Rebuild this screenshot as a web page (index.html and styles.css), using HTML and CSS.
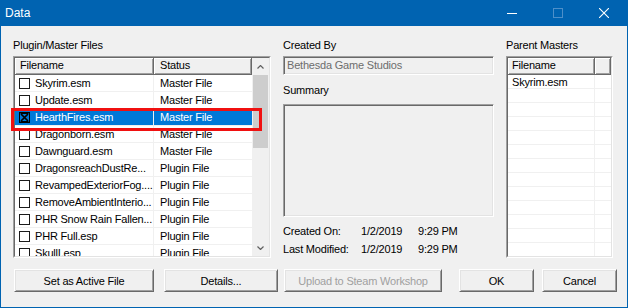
FILE: index.html
```html
<!DOCTYPE html>
<html lang="en">
<head>
    <meta charset="UTF-8">
    <title>Data</title>
    <link rel="stylesheet" href="styles.css">
</head>
<body>

<div class="window">
    <!-- Title bar -->
    <div class="titlebar">
        <span class="title">Data</span>
        <div class="caption-buttons">
            <span class="cap"><svg width="10" height="10" viewBox="0 0 10 10"><line x1="0" y1="5.5" x2="10" y2="5.5" stroke="#fff" stroke-width="1"/></svg></span>
            <span class="cap cap-disabled"><svg width="10" height="10" viewBox="0 0 10 10"><rect x="0.5" y="0.5" width="9" height="9" fill="none" stroke="#4d8fc9" stroke-width="1"/></svg></span>
            <span class="cap"><svg width="10" height="10" viewBox="0 0 10 10"><path d="M0 0 L10 10 M10 0 L0 10" stroke="#fff" stroke-width="1.1"/></svg></span>
        </div>
    </div>

    <div class="client">
        <div class="columns">

            <!-- Plugin / master list -->
            <div class="col col-files">
                <div class="label">Plugin/Master Files</div>
                <div class="listbox">
                    <div class="listbox-inner">
                        <div class="lv">
                            <div class="lv-header">
                                <div class="th th-name">Filename</div>
                                <div class="th th-status">Status</div>
                            </div>
                            <div class="lv-row"><div class="td td-name"><span class="check"></span>Skyrim.esm</div><div class="td td-status">Master File</div></div>
                            <div class="lv-row"><div class="td td-name"><span class="check"></span>Update.esm</div><div class="td td-status">Master File</div></div>
                            <div class="lv-row selected"><div class="td td-name"><span class="check checked"><svg width="11" height="11" viewBox="0 0 11 11"><rect x="0.5" y="0.5" width="10" height="10" fill="none" stroke="#000"/><path d="M2 2 L9 9 M9 2 L2 9" stroke="#000" stroke-width="1.7"/><path d="M1.5 1.5 H9.5 M1.5 9.5 H9.5" stroke="#000" stroke-width="1"/></svg></span>HearthFires.esm</div><div class="td td-status">Master File</div></div>
                            <div class="lv-row"><div class="td td-name"><span class="check"></span>Dragonborn.esm</div><div class="td td-status">Master File</div></div>
                            <div class="lv-row"><div class="td td-name"><span class="check"></span>Dawnguard.esm</div><div class="td td-status">Master File</div></div>
                            <div class="lv-row"><div class="td td-name"><span class="check"></span>DragonsreachDustRe...</div><div class="td td-status">Plugin File</div></div>
                            <div class="lv-row"><div class="td td-name"><span class="check"></span>RevampedExteriorFog....</div><div class="td td-status">Plugin File</div></div>
                            <div class="lv-row"><div class="td td-name"><span class="check"></span>RemoveAmbientInterio...</div><div class="td td-status">Plugin File</div></div>
                            <div class="lv-row"><div class="td td-name"><span class="check"></span>PHR Snow Rain Fallen...</div><div class="td td-status">Plugin File</div></div>
                            <div class="lv-row"><div class="td td-name"><span class="check"></span>PHR Full.esp</div><div class="td td-status">Plugin File</div></div>
                            <div class="lv-row"><div class="td td-name"><span class="check"></span>SkullI.esp</div><div class="td td-status">Plugin File</div></div>
                        </div>
                        <div class="vscroll">
                            <div class="sb-btn"><svg width="7" height="4" viewBox="0 0 7 4"><path d="M0.5 3.5 L3.5 0.5 L6.5 3.5" fill="none" stroke="#606060" stroke-width="1.2"/></svg></div>
                            <div class="sb-track"><div class="sb-thumb"></div></div>
                            <div class="sb-btn"><svg width="7" height="4" viewBox="0 0 7 4"><path d="M0.5 0.5 L3.5 3.5 L6.5 0.5" fill="none" stroke="#606060" stroke-width="1.2"/></svg></div>
                        </div>
                    </div>
                    <!-- red highlight drawn over the selected row -->
                    <div class="mark"></div>
                </div>
            </div>

            <!-- File details -->
            <div class="col col-info">
                <div class="label">Created By</div>
                <div class="field">Bethesda Game Studios</div>
                <div class="label label-summary">Summary</div>
                <div class="field summary"></div>
                <div class="dates">
                    <span>Created On:</span><span>1/2/2019</span><span>9:29 PM</span>
                    <span>Last Modified:</span><span>1/2/2019</span><span>9:29 PM</span>
                </div>
            </div>

            <!-- Parent masters -->
            <div class="col col-parents">
                <div class="label">Parent Masters</div>
                <div class="listbox">
                    <div class="listbox-inner">
                        <div class="lv">
                            <div class="lv-header">
                                <div class="th pm-name">Filename</div>
                                <div class="th pm-rest"></div>
                            </div>
                            <div class="pm-row"><div class="pm-cell">Skyrim.esm</div></div>
                            <div class="pm-row"><div class="pm-cell"></div></div>
                            <div class="pm-row"><div class="pm-cell"></div></div>
                            <div class="pm-row"><div class="pm-cell"></div></div>
                            <div class="pm-row"><div class="pm-cell"></div></div>
                            <div class="pm-row"><div class="pm-cell"></div></div>
                            <div class="pm-row"><div class="pm-cell"></div></div>
                            <div class="pm-row"><div class="pm-cell"></div></div>
                            <div class="pm-row"><div class="pm-cell"></div></div>
                            <div class="pm-row"><div class="pm-cell"></div></div>
                            <div class="pm-row"><div class="pm-cell"></div></div>
                            <div class="pm-row"><div class="pm-cell"></div></div>
                            <div class="pm-row"><div class="pm-cell"></div></div>
                        </div>
                    </div>
                </div>
            </div>
        </div>

        <!-- Dialog buttons -->
        <div class="buttons">
            <button class="btn btn-active">Set as Active File</button>
            <button class="btn btn-details">Details...</button>
            <button class="btn btn-upload" disabled>Upload to Steam Workshop</button>
            <button class="btn btn-ok">OK</button>
            <button class="btn btn-cancel">Cancel</button>
        </div>
    </div>
</div>

</body>
</html>
```

FILE: styles.css
```css
body { margin: 0; background: #fff; }
.window { width: 628px; height: 308px; box-sizing: border-box; border: 1px solid #0063b1; border-top: 0; background: #f0f0f0; display: flex; flex-direction: column; font: 11px "Liberation Sans", Arial, sans-serif; letter-spacing: -0.2px; color: #000; }

.titlebar { height: 26px; flex: none; background: #0063b1; display: flex; align-items: center; color: #fff; }
.title { padding-left: 4px; font: 12px "Liberation Sans", Arial, sans-serif; letter-spacing: 0; }
.caption-buttons { margin-left: auto; display: flex; height: 100%; }
.cap { width: 46px; height: 100%; display: flex; align-items: center; justify-content: center; }
.cap svg { display: block; }

.client { flex: 1; padding: 13px 0 0 12px; }
.columns { display: flex; gap: 12px; }
.col { display: flex; flex-direction: column; }
.col-files { width: 258px; }
.col-info { width: 211px; }
.col-parents { width: 107px; }
.label { height: 13px; line-height: 13px; margin-bottom: 4px; }

/* sunken list box */
.listbox { position: relative; height: 202px; box-sizing: border-box; border: 1px solid; border-color: #a0a0a0 #fff #fff #a0a0a0; }
.listbox-inner { height: 100%; box-sizing: border-box; border: 1px solid; border-color: #696969 #e3e3e3 #e3e3e3 #696969; background: #fff; display: flex; overflow: hidden; }
.lv { flex: 1; overflow: hidden; }
.lv-header { display: flex; height: 17px; }
.th { box-sizing: border-box; height: 17px; line-height: 15px; padding-left: 5px; background: #f0f0f0; border-right: 1px solid #696969; border-bottom: 1px solid #696969; box-shadow: inset 1px 1px #fff, inset -1px -1px #a0a0a0; white-space: nowrap; }
.th-name { width: 139px; }
.th-status { flex: 1; padding-left: 6px; }

.lv-row { display: flex; height: 17px; box-sizing: border-box; border-bottom: 1px solid #f0f0f0; }
.td { line-height: 16px; white-space: nowrap; }
.td-name { width: 139px; box-sizing: border-box; border-right: 1px solid #f0f0f0; display: flex; align-items: center; padding-left: 4px; }
.td-status { flex: 1; padding-left: 6px; }
.check { width: 11px; height: 11px; box-sizing: border-box; border: 1px solid #1a1a1a; margin-right: 5px; flex: none; background: #fff; }
.check.checked { border: 0; background: none; }
.check svg { display: block; }
.lv-row.selected { background: #0078d7; color: #fff; }

.mark { position: absolute; left: -3px; top: 51px; width: 251px; height: 23px; box-sizing: border-box; border: 3px solid #f01010; }

.vscroll { width: 17px; flex: none; background: #f0f0f0; display: flex; flex-direction: column; }
.sb-btn { height: 17px; display: flex; align-items: center; justify-content: center; }
.sb-btn svg { display: block; }
.sb-track { flex: 1; padding: 0 1px; }
.sb-thumb { height: 73px; background: #cdcdcd; }

/* details column */
.field { height: 19px; box-sizing: border-box; border: 1px solid; border-color: #a0a0a0 #fff #fff #a0a0a0; box-shadow: inset 1px 1px #696969, inset -1px -1px #e3e3e3; padding: 0 3px; line-height: 17px; color: #6d6d6d; }
.label-summary { margin-top: 9px; margin-bottom: 7px; }
.summary { height: 113px; }
.dates { margin-top: 5px; display: grid; grid-template-columns: 78px 57px auto; line-height: 18px; }

/* parent masters */
.pm-name { width: 87px; padding-left: 4px; }
.pm-rest { flex: 1; }
.pm-row { height: 14px; box-sizing: border-box; border-bottom: 1px solid #f0f0f0; }
.pm-row:first-of-type { height: 15px; }
.pm-cell { width: 87px; height: 100%; box-sizing: border-box; border-right: 1px solid #f0f0f0; padding-left: 4px; line-height: 14px; }

/* buttons */
.buttons { display: flex; margin-top: 11px; padding-left: 1px; }
.btn { height: 23px; box-sizing: border-box; padding: 0; border: 1px solid; border-color: #fff #696969 #696969 #fff; box-shadow: inset 1px 1px #e3e3e3, inset -1px -1px #a0a0a0; background: #f0f0f0; font: 11px "Liberation Sans", Arial, sans-serif; letter-spacing: -0.2px; color: #000; }
.btn-active { width: 140px; }
.btn-details { width: 114px; margin-left: 10px; }
.btn-upload { width: 158px; margin-left: 6px; color: #a0a0a0; }
.btn-ok { width: 75px; margin-left: 17px; }
.btn-cancel { width: 75px; margin-left: 8px; }
```
